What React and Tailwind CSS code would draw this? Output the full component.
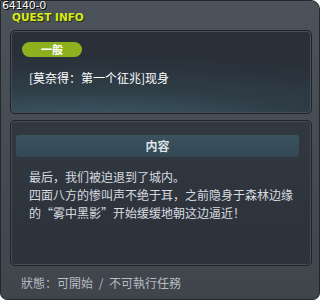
export default function App() {
  const cjk = { fontFamily: '"Noto Sans CJK SC", "Noto Sans", sans-serif' };
  return (
    <div className="w-[322px] h-[302px] bg-white" style={cjk}>
      <div className="relative w-[320px] h-[300px] rounded-tr-[9px] rounded-b-[7px] border border-[#23282e] bg-gradient-to-b from-[#4b5259] to-[#3f454b] flex flex-col">
        <div className="absolute left-[1px] top-[-1px] text-[11px] leading-[12px] text-white [text-shadow:0_0_1px_#000,1px_1px_0_#000] font-['DejaVu_Sans',sans-serif] tracking-[-0.3px]">
          64140-0
        </div>
        <div className="h-[29px] pl-[11px] pt-[10px] text-[10.5px] leading-[12px] font-bold text-[#d8ec1a] font-['DejaVu_Sans',sans-serif] [text-shadow:1px_1px_0_#2a2f10]">
          QUEST INFO
        </div>
        <div className="ml-[9px] mr-[7px] h-[84px] rounded-[5px] border border-[#1d2329] shadow-[inset_0_0_0_1px_#46505a] bg-[radial-gradient(ellipse_140%_90%_at_25%_120%,#416470_0%,#2f3d47_55%,#29303a_100%)] pl-[11px] pt-[11px]">
          <div className="w-[60px] h-[15px] rounded-full bg-[#8cb11c] flex items-center justify-center text-[11px] font-bold text-white leading-none">
            一般
          </div>
          <div className="mt-[14px] ml-[7px] text-[12px] leading-[14px] text-white">
            [莫奈得：第一个征兆]现身
          </div>
        </div>
        <div className="mt-[6px] ml-[9px] mr-[7px] h-[146px] rounded-[5px] border border-[#1d2329] shadow-[inset_0_0_0_1px_#454e57] bg-gradient-to-b from-[#313840] to-[#2d323a] pt-[14px] pl-[5px] pr-[12px]">
          <div className="h-[22px] rounded-[3px] bg-gradient-to-b from-[#3b525f] to-[#344854] flex items-center justify-center text-[12px] font-bold text-[#dde3e6]">
            内容
          </div>
          <div className="mt-[11px] pl-[13px] text-[12px] leading-[18px] text-[#d8dce0] whitespace-nowrap">
            <div>最后，我们被迫退到了城内。</div>
            <div>四面八方的惨叫声不绝于耳，之前隐身于森林边缘</div>
            <div>的“雾中黑影”开始缓缓地朝这边逼近！</div>
          </div>
        </div>
        <div className="mt-[10px] pl-[20px] text-[12px] leading-[14px] text-[#b6bcc2] [word-spacing:3px]">
          狀態：可開始 / 不可執行任務
        </div>
      </div>
    </div>
  );
}
